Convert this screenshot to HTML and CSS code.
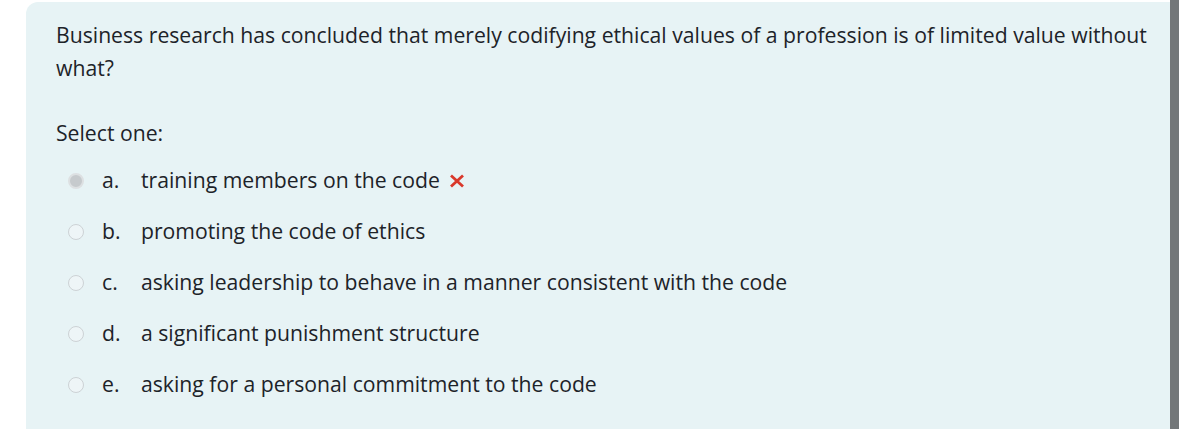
FILE: index.html
```html
<!DOCTYPE html>
<html lang="en">
<head>
<meta charset="utf-8">
<title>Question</title>
<link rel="stylesheet" href="styles.css">
</head>
<body>
<div class="page">
  <div class="card">
    <div class="qtext">Business research has concluded that merely codifying ethical values of a profession is of limited value without what?</div>
    <div class="prompt">Select one:</div>
    <div class="answers">
      <div class="opt">
        <span class="radio checked"></span>
        <span class="letter">a.</span>
        <span class="text">training members on the code</span>
        <svg class="xmark" width="16" height="14" viewBox="0 0 16 14"><path d="M2 1.5 L14 12.5 M14 1.5 L2 12.5" stroke="#d9382b" stroke-width="2.8" stroke-linecap="butt"/></svg>
      </div>
      <div class="opt">
        <span class="radio"></span>
        <span class="letter">b.</span>
        <span class="text">promoting the code of ethics</span>
      </div>
      <div class="opt">
        <span class="radio"></span>
        <span class="letter">c.</span>
        <span class="text">asking leadership to behave in a manner consistent with the code</span>
      </div>
      <div class="opt">
        <span class="radio"></span>
        <span class="letter">d.</span>
        <span class="text">a significant punishment structure</span>
      </div>
      <div class="opt">
        <span class="radio"></span>
        <span class="letter">e.</span>
        <span class="text">asking for a personal commitment to the code</span>
      </div>
    </div>
  </div>
  <div class="scrollbar"></div>
</div>
</body>
</html>
```

FILE: styles.css
```css
html, body {
  margin: 0;
  padding: 0;
  background: #ffffff;
}
body {
  font-family: "Open Sans", "Noto Sans", sans-serif;
  color: #1d2329;
  font-size: 21.2px;
}
.page {
  display: flex;
  height: 429px;
  padding: 2px 7px 0 26px;
  box-sizing: border-box;
  overflow: hidden;
}
.card {
  flex: 1;
  background: #e7f3f5;
  border-top-left-radius: 12px;
  padding: 16px 20px 0 30px;
  box-sizing: border-box;
}
.scrollbar {
  width: 9px;
  background: #737779;
  margin-top: -2px;
}
.qtext {
  line-height: 33px;
}
.prompt {
  margin-top: 32px;
  line-height: 33px;
}
.answers {
  margin-top: 14px;
  display: flex;
  flex-direction: column;
  gap: 18px;
  padding-left: 12px;
}
.opt {
  display: flex;
  align-items: center;
  line-height: 33px;
}
.radio {
  width: 16px;
  height: 16px;
  border-radius: 50%;
  border: 1px solid #cdd2d5;
  background: #eef5f7;
  box-sizing: border-box;
  margin-right: 18px;
  margin-top: 3px;
}
.radio.checked {
  background: #c6cacd;
  border: 2px solid #dde0e2;
}
.letter {
  width: 39px;
}
.xmark {
  margin-left: 9px;
  margin-top: 2px;
}
```
